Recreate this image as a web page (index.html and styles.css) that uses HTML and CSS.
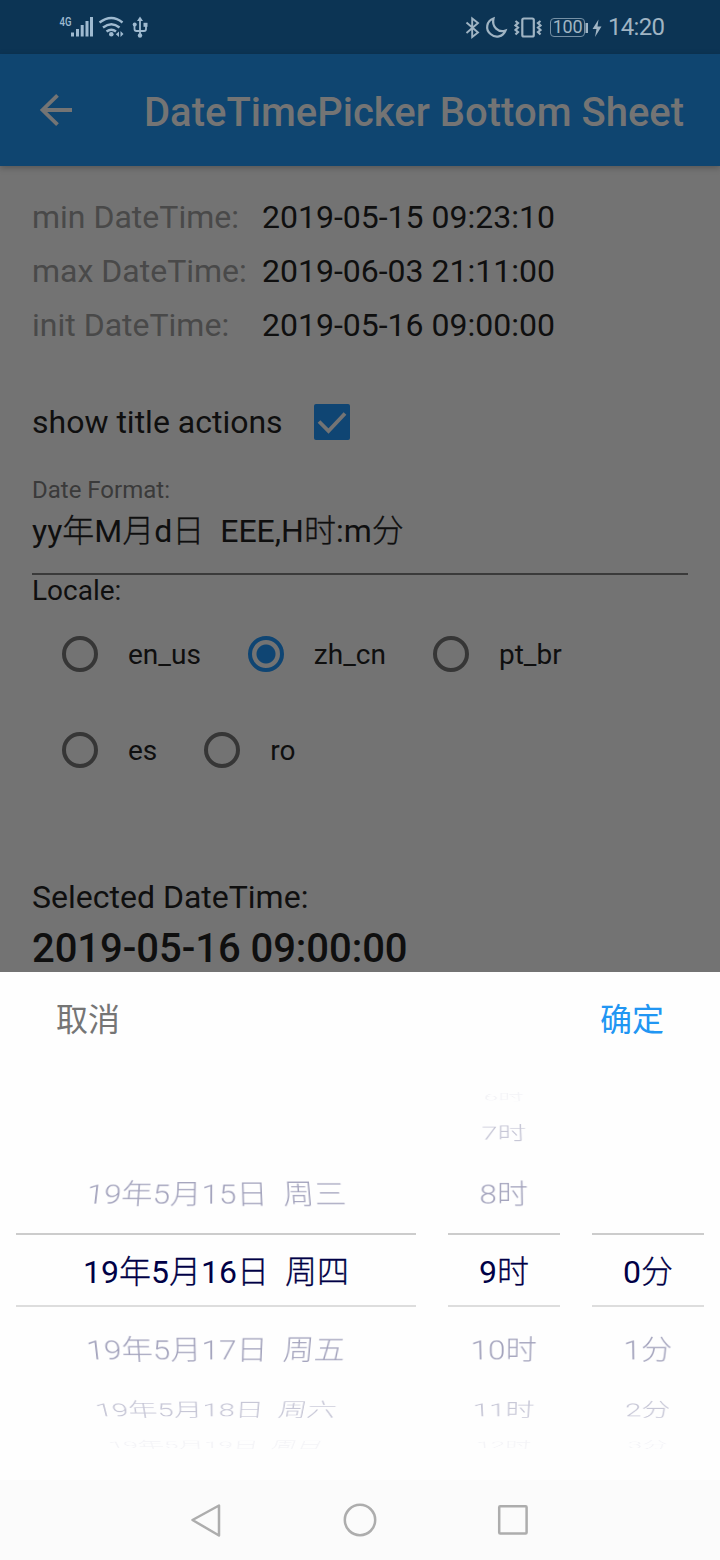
FILE: index.html
```html
<!DOCTYPE html>
<html lang="zh-CN">
<head>
<meta charset="utf-8">
<title>DateTimePicker Bottom Sheet</title>
<link rel="stylesheet" href="styles.css">
</head>
<body>
<div class="screen">
  <div class="status">
    <svg class="status-left" width="96" height="28" viewBox="56 12 96 28" fill="none" stroke="#9fbad0">
      <text class="net" x="59.500" y="25.500" textLength="12" lengthAdjust="spacingAndGlyphs">4G</text>
      <path stroke-width="3" d="M72.5 36.5V32.5M77.5 36.5V29M82.2 36.5V25M87 36.5V21M91.5 36.5V17"/>
      <g stroke-width="2.4"><path d="M99.5 22.5q12-9 23 0M103 27.5q8.500-6.500 16.500 0M106.500 31.500q5-3.600 9.500 0"/></g>
      <circle cx="111.300" cy="34.200" r="2.300" fill="#9fbad0" stroke="none"/>
      <path d="M119 31.500v5.500l-3.200-2.700zM120.500 31v6l3-3z" fill="#9fbad0" stroke="none"/>
      <path stroke-width="1.800" d="M140 20v14M134.500 25v4q0 2 2 2h7.500q2 0 2-2v-4"/>
      <path d="M140 16.500l3 4.500h-6z" fill="#9fbad0" stroke="none"/>
      <g fill="#9fbad0" stroke="none"><circle cx="140" cy="35.500" r="2.200"/><circle cx="134.700" cy="24.500" r="2"/><rect x="143.500" y="22.800" width="4" height="4"/></g>
    </svg>
    <div class="status-right">
      <svg width="78" height="28" viewBox="464 12 78 28" fill="none" stroke="#a0b4c3" stroke-width="1.900">
        <path d="M466.500 21.500l11.500 10-5.800 4.500V17.500l5.800 4.500-11.500 10"/>
        <path stroke-width="2.200" d="M493.500 17.500c-7 2.500-8.500 11-3 15.500 5 4.500 12.500 3 15-3.500-7 2.500-14-3.500-12-12z"/>
        <rect x="522.300" y="17.500" width="11.500" height="18" rx="1.500" stroke-width="2.200"/>
        <path stroke-width="2.200" d="M515.500 20l2.500 2-2.500 2.500 2.500 2-2.500 2.500 2.500 2-2.500 2.500M540.500 20l-2.500 2 2.500 2.500-2.500 2 2.500 2.500-2.500 2 2.500 2.500"/>
      </svg>
      <span class="battery">100</span>
      <svg class="charge" width="18" height="28" viewBox="586 12 18 28" fill="#a0b4c3"><path d="M586.500 22h2.500v10h-2.500zM599.500 18.500l-6 9.500h4l-1.500 8 6.500-10.500h-4z"/></svg>
      <span class="clock">14:20</span>
    </div>
  </div>
  <div class="appbar">
    <svg width="36" height="36" viewBox="38 92 36 36" fill="none" stroke="#747474" stroke-width="3.800"><path d="M72 110H42.500M57.500 95.300L42.500 110l15 14.700"/></svg>
    <h1 class="title">DateTimePicker Bottom Sheet</h1>
  </div>
  <div class="content">
    <div class="info"><span class="info-label">min DateTime:</span><span>2019-05-15 09:23:10</span></div>
    <div class="info"><span class="info-label">max DateTime:</span><span>2019-06-03 21:11:00</span></div>
    <div class="info"><span class="info-label">init DateTime:</span><span>2019-05-16 09:00:00</span></div>
    <div class="check-row"><span>show title actions</span>
      <svg width="36" height="36" viewBox="0 0 36 36"><rect width="36" height="36" rx="2" fill="#0f4573"/><path d="M5 17.500l9.500 9.500L31 9.500" fill="none" stroke="#747474" stroke-width="3.800"/></svg>
    </div>
    <div class="field">
      <div class="field-label">Date Format:</div>
      <div class="field-value">yy<i>年</i>M<i>月</i>d<i>日</i>&nbsp; EEE,H<i>时</i>:m<i>分</i></div>
    </div>
    <div class="locale">Locale:</div>
    <div class="radios"><span class="radio"><b class="dot"></b>en_us</span><span class="radio"><b class="dot on"></b>zh_cn</span><span class="radio"><b class="dot"></b>pt_br</span></div>
    <div class="radios"><span class="radio"><b class="dot"></b>es</span><span class="radio"><b class="dot"></b>ro</span></div>
    <div class="selected-label">Selected DateTime:</div>
    <div class="selected-value">2019-05-16 09:00:00</div>
  </div>
  <div class="sheet">
    <div class="actions"><span class="cancel">取消</span><span class="ok">确定</span></div>
    <div class="wheels">
      <div class="wheel wheel-date">
        <div class="item up3"></div><div class="item up2"></div>
        <div class="item up1"><span>19年5月15日&nbsp; 周三</span></div>
        <div class="item now"><span>19<i>年</i>5<i>月</i>16<i>日</i>&nbsp; <i>周四</i></span></div>
        <div class="item down1"><span>19年5月17日&nbsp; 周五</span></div>
        <div class="item down2"><span>19年5月18日&nbsp; 周六</span></div>
        <div class="item down3"><span>19年5月19日&nbsp; 周日</span></div>
      </div>
      <div class="wheel">
        <div class="item up3"><span>6时</span></div>
        <div class="item up2"><span>7时</span></div>
        <div class="item up1"><span>8时</span></div>
        <div class="item now"><span>9<i>时</i></span></div>
        <div class="item down1"><span>10时</span></div>
        <div class="item down2"><span>11时</span></div>
        <div class="item down3"><span>12时</span></div>
      </div>
      <div class="wheel">
        <div class="item up3"></div><div class="item up2"></div><div class="item up1"></div>
        <div class="item now"><span>0<i>分</i></span></div>
        <div class="item down1"><span>1分</span></div>
        <div class="item down2"><span>2分</span></div>
        <div class="item down3"><span>3分</span></div>
      </div>
    </div>
  </div>
  <div class="nav">
    <svg width="32" height="36" viewBox="0 0 32 36"><path d="M29 3.500v30L2.500 18z"/></svg>
    <svg width="36" height="36" viewBox="0 0 36 36"><circle cx="18" cy="18" r="15.200"/></svg>
    <svg width="32" height="36" viewBox="0 0 32 36"><rect x="2.200" y="4.200" width="27.400" height="27.400" rx="1"/></svg>
  </div>
</div>
</body>
</html>
```
FILE: styles.css
```css
* { box-sizing: border-box; }
body { margin: 0; font-family: Roboto, "Noto Sans CJK SC", sans-serif; }
i { font-style: normal; font-weight: 300; -webkit-text-stroke: .3px currentColor; }
svg { display: block; flex: none; }
.screen { width: 720px; height: 1560px; display: flex; flex-direction: column; overflow: hidden; background: #737373; color: #0f0f0f; font-size: 32px; white-space: nowrap; }

.status { height: 54px; flex: none; display: flex; justify-content: space-between; align-items: center; padding: 0 56px 0 56px; background: #0c3454; }
.net { font-size: 12px; font-weight: 500; fill: #9fbad0; stroke: none; }
.status-left { margin-top: -2px; }
.status-right { display: flex; align-items: center; color: #a0b4c3; }
.battery { width: 35px; height: 19px; margin-left: 8px; border: 1.5px solid #7590a5; border-radius: 4px; font-size: 18px; line-height: 16px; text-align: center; letter-spacing: -.3px; }
.charge { margin-top: -1px; }
.clock { width: 56px; margin-left: 5px; font-size: 24px; line-height: 28px; letter-spacing: -.7px; }

.appbar { height: 112px; flex: none; display: flex; align-items: center; padding-left: 38px; background: #0f4570; box-shadow: 0 2px 6px rgba(0,0,0,.25); z-index: 1; }
.title { margin: 5px 0 0 70px; font-size: 40px; line-height: 48px; font-weight: 500; color: #747474; }

.content { height: 806px; flex: none; display: flex; flex-direction: column; padding: 24px 32px 0; }
.content > div { flex: none; }
.info { height: 54px; display: flex; align-items: center; line-height: 54px; }
.info-label { width: 230px; color: #494949; }
.check-row { height: 96px; margin-top: 22px; display: flex; align-items: center; gap: 31px; }
.field { height: 105px; border-bottom: 2px solid #3a3a3a; }
.field-label { padding-top: 6px; font-size: 24px; line-height: 28px; color: #3a3a3a; }
.field-value { margin-top: 7px; line-height: 40px; }
.locale { height: 31px; font-size: 28px; line-height: 31px; }
.radios { height: 96px; display: flex; align-items: center; gap: 17px; font-size: 28px; }
.radio { display: flex; align-items: center; gap: 30px; padding-left: 30px; }
.dot { width: 36px; height: 36px; border: 4px solid #363636; border-radius: 50%; }
.dot.on { border-color: #0f4573; background: radial-gradient(circle, #0f4573 9px, transparent 10px); }
.selected-label { margin-top: 79px; line-height: 40px; }
.selected-value { margin-top: 8px; font-size: 40px; line-height: 48px; font-weight: 500; letter-spacing: -.05px; }

.sheet { height: 508px; flex: none; background: #fefefe; z-index: 1; }
.actions { height: 95px; display: flex; justify-content: space-between; padding: 0 56px; line-height: 96px; }
.cancel { color: #757575; }
.ok { color: #2196f3; }
.wheels { display: flex; gap: 32px; padding: 16px 16px 0; }
.wheel { width: 112px; }
.wheel-date { width: 400px; }
.item { display: flex; align-items: center; justify-content: center; color: #000046; font-weight: 300; }
.item span { display: block; line-height: 38px; }
.up3 { height: 28px; }
.up2 { height: 44px; }
.up1 { height: 78px; }
.now { height: 74px; padding-top: 4px; border-top: 2px solid #ccc; border-bottom: 2px solid #ddd; font-weight: 400; }
.down1 { height: 86px; }
.down2 { height: 34px; }
.down3 { height: 36px; }
.up1 span, .down1 span { opacity: .36; }
.up2 span, .down2 span { opacity: .22; }
.up3 span, .down3 span { opacity: .04; }
.up1 span { transform: scaleX(.98) perspective(600px) rotateX(30deg); }
.down1 span { transform: scaleX(.98) perspective(600px) rotateX(-30deg); }
.up2 span { transform: scaleX(.91) perspective(600px) rotateX(54deg); }
.down2 span { transform: scaleX(.91) perspective(600px) rotateX(-54deg); }
.up3 span { transform: scaleX(.81) perspective(600px) rotateX(72deg); }
.down3 span { transform: scaleX(.81) perspective(600px) rotateX(-72deg); }

.nav { height: 80px; flex: none; display: flex; align-items: center; justify-content: space-between; padding: 0 191px 0 190px; background: #fbfbfb; }
.nav svg { fill: none; stroke: #adadad; stroke-width: 2.5; stroke-linejoin: round; }
```
